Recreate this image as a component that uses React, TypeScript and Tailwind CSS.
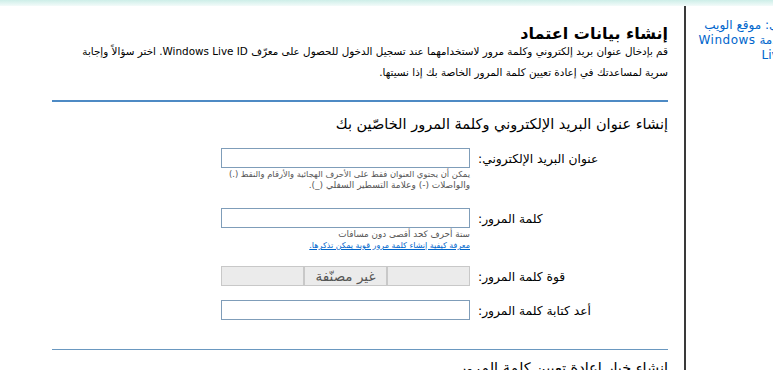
import React from "react";

const F = { fontFamily: '"DejaVu Sans", "Noto Sans", sans-serif' };

export default function App() {
  return (
    <div className="w-[773px] h-[370px] overflow-hidden bg-white relative" style={F}>
      <div className="h-[6px] w-full bg-gradient-to-b from-[#cdeee8] to-[#f3fbfa]" />
      <div className="flex w-[820px] h-[364px]">
        {/* main column */}
        <div className="w-[686px] shrink-0 pl-[52px] pr-[16px] border-r-[2px] border-[#3a3a3a]" dir="rtl">
          <div className="mt-[21px] text-[16px] leading-[14px] font-bold text-black whitespace-nowrap">إنشاء بيانات اعتماد</div>
          <div className="text-[10.4px] leading-[21px] text-black whitespace-nowrap">
            <div>قم بإدخال عنوان بريد إلكتروني وكلمة مرور لاستخدامهما عند تسجيل الدخول للحصول على معرّف Windows Live ID. اختر سؤالاً وإجابة</div>
            <div>سرية لمساعدتك في إعادة تعيين كلمة المرور الخاصة بك إذا نسيتها.</div>
          </div>
          <div className="mt-[17px] h-[2px] bg-[#4d8ac4]" />
          <div className="mt-[12px] text-[14.5px] leading-[20px] text-black whitespace-nowrap">إنشاء عنوان البريد الإلكتروني وكلمة المرور الخاصّين بك</div>

          {/* email row */}
          <div className="mt-[14px] flex">
            <div className="w-[190px] shrink-0 text-left text-[12.3px] leading-[20px] pt-[1px] text-black whitespace-nowrap">
              <span dir="rtl">عنوان البريد الإلكتروني:</span>
            </div>
            <div className="mr-[8px] w-[249px]">
              <div className="h-[20px] border border-[#7f9db9] bg-white" />
              <div className="pt-[1px] text-[8.4px] leading-[11px] text-[#555] whitespace-nowrap">
                <div>يمكن أن يحتوي العنوان فقط على الأحرف الهجائية والأرقام والنقط (.)</div>
                <div className="text-[9px]">والواصلات (-) وعلامة التسطير السفلي (_).</div>
              </div>
            </div>
          </div>

          {/* password row */}
          <div className="mt-[17px] flex">
            <div className="w-[190px] shrink-0 text-left text-[12.3px] leading-[20px] pt-[1px] text-black whitespace-nowrap">
              <span dir="rtl">كلمة المرور:</span>
            </div>
            <div className="mr-[8px] w-[249px]">
              <div className="h-[20px] border border-[#7f9db9] bg-white" />
              <div className="text-[8.8px] leading-[12px] text-[#555] whitespace-nowrap">
                <div>ستة أحرف كحد أقصى دون مسافات</div>
                <div className="text-[8px]">
                  <a href="#" className="text-[#0066cc] underline">معرفة كيفية إنشاء كلمة مرور قوية يمكن تذكرها.</a>
                </div>
              </div>
            </div>
          </div>

          {/* strength row */}
          <div className="mt-[14px] flex">
            <div className="w-[190px] shrink-0 text-left text-[12.3px] leading-[20px] pt-[1px] text-black whitespace-nowrap">
              <span dir="rtl">قوة كلمة المرور:</span>
            </div>
            <div className="mr-[8px] w-[249px] flex h-[20px]">
              <div className="w-[83px] h-[20px] bg-[#ebebeb] border border-[#c8c8c8]" />
              <div className="w-[83px] h-[20px] bg-[#ebebeb] border border-[#c8c8c8] text-[13.5px] leading-[18px] text-[#555] text-center whitespace-nowrap">غير مصنّفة</div>
              <div className="w-[83px] h-[20px] bg-[#ebebeb] border border-[#c8c8c8]" />
            </div>
          </div>

          {/* retype row */}
          <div className="mt-[13px] flex">
            <div className="w-[190px] shrink-0 text-left text-[12.3px] leading-[20px] pt-[1px] text-black whitespace-nowrap">
              <span dir="rtl">أعد كتابة كلمة المرور:</span>
            </div>
            <div className="mr-[8px] w-[249px]">
              <div className="h-[20px] border border-[#7f9db9] bg-white" />
            </div>
          </div>

          <div className="mt-[28px] h-[1px] bg-[#6a98c0]" />
          <div className="mt-[8px] text-[14.5px] leading-[20px] text-black whitespace-nowrap">إنشاء خيار إعادة تعيين كلمة المرور</div>
        </div>

        {/* sidebar */}
        <div className="w-[100px] shrink-0 pt-[12px] text-right text-[#0066cc]" dir="rtl">
          <div className="text-[12px] leading-[15px] whitespace-nowrap">إلى: موقع الويب</div>
          <div className="text-[12px] leading-[15px] whitespace-nowrap tracking-[0.5px]">خدمة Windows</div>
          <div className="text-[12px] leading-[15px] whitespace-nowrap">Live</div>
        </div>
      </div>
    </div>
  );
}
